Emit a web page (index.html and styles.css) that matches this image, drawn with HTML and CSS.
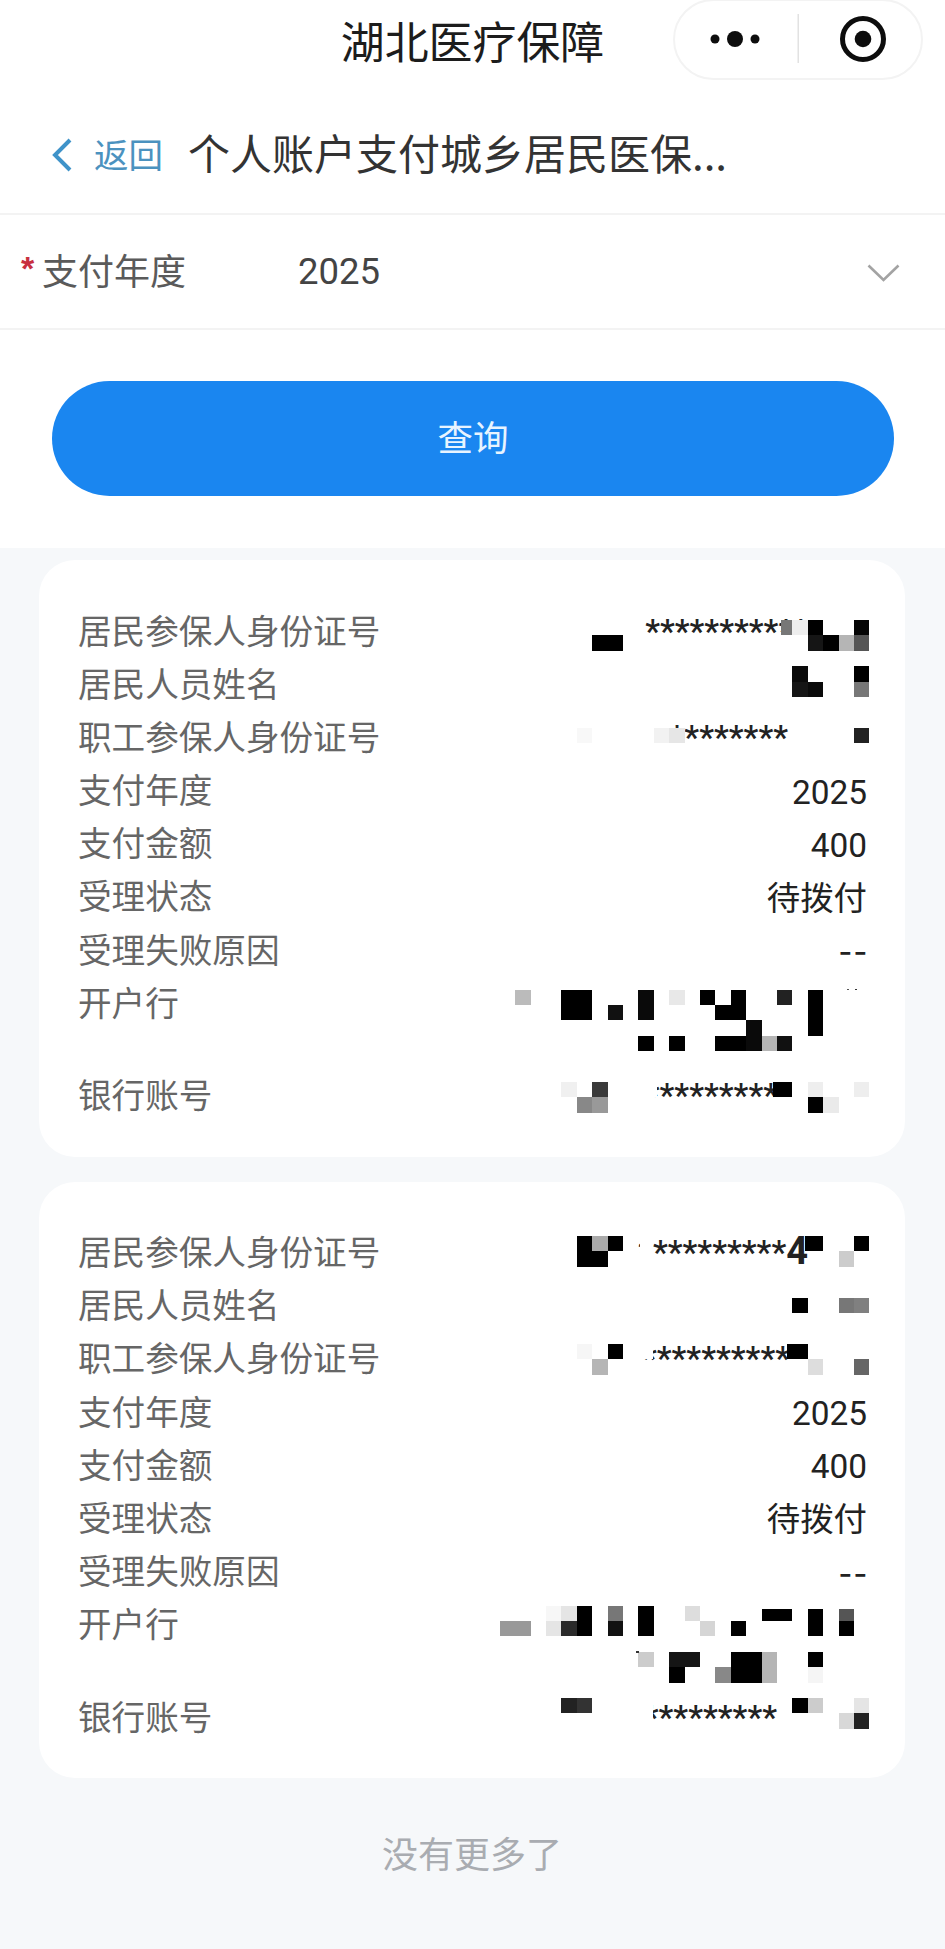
FILE: index.html
```html
<!DOCTYPE html>
<html lang="zh-CN">
<head>
<meta charset="utf-8">
<title>湖北医疗保障</title>
<link rel="stylesheet" href="styles.css">
</head>
<body>
<div class="page">
  <section class="top">
    <header class="appbar">
      <h1 class="appbar-title">湖北医疗保障</h1>
      <div class="capsule">
        <svg class="capsule-icon" width="250" height="80" viewBox="0 0 250 80">
          <circle cx="42" cy="39" r="4.5" fill="#0d0d0d"/>
          <circle cx="62" cy="39" r="8" fill="#0d0d0d"/>
          <circle cx="82" cy="39" r="4.5" fill="#0d0d0d"/>
          <rect x="124.5" y="14" width="1.5" height="49" fill="#e2e2e2"/>
          <circle cx="190" cy="39" r="20.5" fill="none" stroke="#0d0d0d" stroke-width="5"/>
          <circle cx="190" cy="39" r="8.3" fill="#0d0d0d"/>
        </svg>
      </div>
    </header>
    <nav class="navbar">
      <a class="back">
        <svg class="back-icon" width="20" height="34" viewBox="0 0 20 34"><path d="M18 2 L3 17 L18 32" fill="none" stroke="#3f93c9" stroke-width="4"/></svg>
        <span class="back-text">返回</span>
      </a>
      <span class="nav-title">个人账户支付城乡居民医保...</span>
    </nav>
    <div class="field">
      <span class="req">*</span>
      <span class="field-label">支付年度</span>
      <span class="field-value">2025</span>
      <svg class="field-arrow" width="33" height="18" viewBox="0 0 33 18"><path d="M1.5 1.5 L16.5 16 L31.5 1.5" fill="none" stroke="#a3a3a3" stroke-width="2.6"/></svg>
    </div>
    <button class="query" type="button">查询</button>
  </section>

  <main class="list">
    <article class="card">
      <div class="row"><span class="key">居民参保人身份证号</span><span class="val masked end-59">***********</span></div>
      <div class="row"><span class="key">居民人员姓名</span><span class="val"></span></div>
      <div class="row"><span class="key">职工参保人身份证号</span><span class="val masked end-79">********</span></div>
      <div class="row"><span class="key">支付年度</span><span class="val">2025</span></div>
      <div class="row"><span class="key">支付金额</span><span class="val">400</span></div>
      <div class="row"><span class="key">受理状态</span><span class="val">待拨付</span></div>
      <div class="row"><span class="key">受理失败原因</span><span class="val dash">--</span></div>
      <div class="row row-tall"><span class="key">开户行</span><span class="val"></span></div>
      <div class="row"><span class="key">银行账号</span><span class="val masked end-89">*********</span></div>
    </article>
    <article class="card">
      <div class="row"><span class="key">居民参保人身份证号</span><span class="val masked end-59">**********<b class="tail">4</b></span></div>
      <div class="row"><span class="key">居民人员姓名</span><span class="val"></span></div>
      <div class="row"><span class="key">职工参保人身份证号</span><span class="val masked end-77">**********</span></div>
      <div class="row"><span class="key">支付年度</span><span class="val">2025</span></div>
      <div class="row"><span class="key">支付金额</span><span class="val">400</span></div>
      <div class="row"><span class="key">受理状态</span><span class="val">待拨付</span></div>
      <div class="row"><span class="key">受理失败原因</span><span class="val dash">--</span></div>
      <div class="row row-tall"><span class="key">开户行</span><span class="val"></span></div>
      <div class="row"><span class="key">银行账号</span><span class="val masked end-90">*********</span></div>
    </article>
    <p class="nomore">没有更多了</p>
  </main>

  <svg class="mosaic" width="945" height="1949" viewBox="-56.461 -40.26 61.364 126.558" shape-rendering="crispEdges" aria-hidden="true">
    <!-- card 1: id -->
    <rect x="-1" y="0" width="1" height="1" fill="#050505"/>
    <rect x="-4" y="0" width="1" height="1" fill="#000"/>
    <rect x="-5" y="0" width="1" height="1" fill="#eee"/>
    <rect x="-5.75" y="0" width="0.75" height="1" fill="#777"/>
    <rect x="-1" y="1" width="1" height="1" fill="#555"/>
    <rect x="-2" y="1" width="1" height="1" fill="#b5b5b5"/>
    <rect x="-3" y="1" width="1" height="1" fill="#000"/>
    <rect x="-4" y="1" width="1" height="1" fill="#151515"/>
    <rect x="-18" y="1" width="2" height="1" fill="#000"/>
    <!-- card 1: name -->
    <rect x="-1" y="3" width="1" height="1" fill="#000"/>
    <rect x="-5" y="3" width="1" height="1" fill="#0a0a0a"/>
    <rect x="-1" y="4" width="1" height="1" fill="#777"/>
    <rect x="-4" y="4" width="1" height="1" fill="#0a0a0a"/>
    <rect x="-5" y="4" width="1" height="1" fill="#151515"/>
    <!-- card 1: worker id -->
    <rect x="-1" y="7" width="1" height="1" fill="#222"/>
    <rect x="-13" y="7" width="1" height="1" fill="#e6e6e6"/>
    <rect x="-14" y="7" width="1" height="1" fill="#f2f2f2"/>
    <rect x="-19" y="7" width="1" height="1" fill="#f8f8f8"/>
    <!-- card 1: bank -->
    <rect x="-23" y="24" width="1" height="1" fill="#bbb"/>
    <rect x="-20" y="24" width="2" height="2" fill="#000"/>
    <rect x="-15" y="24" width="1" height="2" fill="#0a0a0a"/>
    <rect x="-13" y="24" width="1" height="1" fill="#e8e8e8"/>
    <rect x="-11" y="24" width="1" height="1" fill="#000"/>
    <rect x="-9" y="24" width="1" height="1" fill="#000"/>
    <rect x="-6" y="24" width="1" height="1" fill="#222"/>
    <rect x="-4" y="24" width="1" height="3" fill="#000"/>
    <rect x="-17" y="25" width="1" height="1" fill="#111"/>
    <rect x="-10" y="25" width="2" height="1" fill="#000"/>
    <rect x="-8" y="26" width="1" height="2" fill="#0a0a0a"/>
    <rect x="-15" y="27" width="1" height="1" fill="#000"/>
    <rect x="-13" y="27" width="1" height="1" fill="#000"/>
    <rect x="-10" y="27" width="2" height="1" fill="#000"/>
    <rect x="-7" y="27" width="1" height="1" fill="#b5b5b5"/>
    <rect x="-6" y="27" width="1" height="1" fill="#111"/>
    <rect x="-1.48" y="23.93" width="0.12" height="0.08" fill="#555"/>
    <rect x="-0.94" y="23.93" width="0.12" height="0.08" fill="#333"/>
    <!-- card 1: account -->
    <rect x="-14.9" y="30" width="1.08" height="1" fill="#fff"/>
    <rect x="-20" y="30" width="1" height="1" fill="#f0f0f0"/>
    <rect x="-18" y="30" width="1" height="1" fill="#3a3a3a"/>
    <rect x="-6.25" y="30" width="1.25" height="1" fill="#000"/>
    <rect x="-4" y="30" width="1" height="1" fill="#eee"/>
    <rect x="-1" y="30" width="1" height="1" fill="#eee"/>
    <rect x="-19" y="31" width="1" height="1" fill="#888"/>
    <rect x="-18" y="31" width="1" height="1" fill="#999"/>
    <rect x="-4" y="31" width="1" height="1" fill="#000"/>
    <rect x="-3" y="31" width="1" height="1" fill="#eaeaea"/>
    <!-- card 2: id -->
    <rect x="-14.9" y="40" width="0.82" height="2" fill="#fff"/>
    <rect x="-1" y="40" width="1" height="1" fill="#000"/>
    <rect x="-4.19" y="40" width="1.19" height="1" fill="#000"/>
    <rect x="-17" y="40" width="1" height="1" fill="#000"/>
    <rect x="-18" y="40" width="1" height="1" fill="#aaa"/>
    <rect x="-19" y="40" width="1" height="1" fill="#000"/>
    <rect x="-2" y="41" width="1" height="1" fill="#ccc"/>
    <rect x="-19" y="41" width="2" height="1" fill="#000"/>
    <!-- card 2: name -->
    <rect x="-5" y="44" width="1" height="1" fill="#000"/>
    <rect x="-2" y="44" width="1" height="1" fill="#777"/>
    <rect x="-1" y="44" width="1" height="1" fill="#808080"/>
    <!-- card 2: worker id -->
    <rect x="-14.9" y="47" width="0.82" height="1" fill="#fff"/>
    <rect x="-17" y="47" width="1" height="1" fill="#000"/>
    <rect x="-5.38" y="47" width="1.38" height="1" fill="#000"/>
    <rect x="-19" y="47" width="1" height="1" fill="#f6f6f6"/>
    <rect x="-18" y="48" width="1" height="1" fill="#b5b5b5"/>
    <rect x="-4" y="48" width="1" height="1" fill="#ddd"/>
    <rect x="-1" y="48" width="1" height="1" fill="#666"/>
    <!-- card 2: bank -->
    <rect x="-21" y="64" width="1" height="1" fill="#f7f7f7"/>
    <rect x="-20" y="64" width="1" height="1" fill="#e5e5e5"/>
    <rect x="-19" y="64" width="1" height="2" fill="#000"/>
    <rect x="-17" y="64" width="1" height="1" fill="#777"/>
    <rect x="-15" y="64" width="1" height="2" fill="#000"/>
    <rect x="-12" y="64" width="1" height="1" fill="#ddd"/>
    <rect x="-7" y="64.2" width="2" height="0.8" fill="#000"/>
    <rect x="-4" y="64.2" width="1" height="1.8" fill="#000"/>
    <rect x="-2" y="64.2" width="1" height="0.8" fill="#555"/>
    <rect x="-24" y="65" width="2" height="1" fill="#999"/>
    <rect x="-21" y="65" width="1" height="1" fill="#e5e5e5"/>
    <rect x="-20" y="65" width="1" height="1" fill="#2a2a2a"/>
    <rect x="-17" y="65" width="1" height="1" fill="#111"/>
    <rect x="-11" y="65" width="1" height="1" fill="#d5d5d5"/>
    <rect x="-9" y="65" width="1" height="1" fill="#000"/>
    <rect x="-2" y="65" width="1" height="1" fill="#000"/>
    <rect x="-15" y="67" width="1" height="1" fill="#ccc"/>
    <rect x="-15.16" y="66.98" width="0.2" height="0.1" fill="#333"/>
    <rect x="-13" y="67" width="2" height="1" fill="#151515"/>
    <rect x="-9" y="67" width="2" height="2" fill="#000"/>
    <rect x="-7" y="67" width="1" height="2" fill="#b5b5b5"/>
    <rect x="-4" y="67" width="1" height="1" fill="#000"/>
    <rect x="-13" y="68" width="1" height="1" fill="#000"/>
    <rect x="-10" y="68" width="1" height="1" fill="#888"/>
    <rect x="-4" y="68" width="1" height="1" fill="#f5f5f5"/>
    <!-- card 2: account -->
    <rect x="-14.9" y="70" width="0.82" height="2" fill="#fff"/>
    <rect x="-20" y="70" width="1" height="1" fill="#222"/>
    <rect x="-19" y="70" width="1" height="1" fill="#333"/>
    <rect x="-5" y="70" width="1" height="1" fill="#000"/>
    <rect x="-4" y="70" width="1" height="1" fill="#ccc"/>
    <rect x="-1" y="70" width="1" height="1" fill="#e5e5e5"/>
    <rect x="-2" y="71" width="1" height="1" fill="#d8d8d8"/>
    <rect x="-1" y="71" width="1" height="1" fill="#222"/>
  </svg>
</div>
</body>
</html>
```

FILE: styles.css
```css
* { box-sizing: border-box; }
html, body { margin: 0; padding: 0; }
body {
  background: #f6f8fa;
  font-family: "Noto Sans CJK SC", "Noto Sans", sans-serif;
}
.page {
  position: relative;
  width: 945px;
  height: 1949px;
  overflow: hidden;
}

/* top white area */
.top {
  background: #fff;
  height: 548px;
  display: flex;
  flex-direction: column;
}
.appbar {
  position: relative;
  height: 82px;
  display: flex;
  align-items: center;
  justify-content: center;
}
.appbar-title {
  margin: 0 0 2px;
  font-size: 43.9px;
  font-weight: 400;
  line-height: 82px;
  color: #1c1c1c;
}
.capsule {
  position: absolute;
  left: 673px;
  top: -1px;
  width: 250px;
  height: 81px;
  border: 2px solid #f3f3f3;
  border-radius: 41px;
}
.capsule-icon {
  position: absolute;
  left: -2px;
  top: -1px;
}

.navbar {
  height: 133px;
  padding: 14px 0 0 52px;
  display: flex;
  align-items: center;
  border-bottom: 2px solid #f3f3f3;
}
.back { display: flex; align-items: center; }
.back-icon { display: block; }
.back-text {
  margin: 0 0 4px 22px;
  font-size: 34.5px;
  line-height: 50px;
  color: #4b92bf;
}
.nav-title {
  margin: 0 0 5px 25px;
  font-size: 42px;
  line-height: 56px;
  color: #333;
  white-space: nowrap;
}

.field {
  height: 115px;
  padding: 0 45px 0 21px;
  display: flex;
  align-items: center;
  border-bottom: 2px solid #f3f3f3;
}
.req {
  width: 21px;
  height: 30px;
  margin-top: -8px;
  font-family: "Liberation Sans", sans-serif;
  font-size: 34px;
  font-weight: 700;
  line-height: 30px;
  color: #c8303f;
}
.field-label {
  width: 256px;
  margin-bottom: 5px;
  font-size: 36px;
  line-height: 50px;
  color: #5a5a5a;
}
.field-value {
  flex: 1;
  font-family: Roboto, sans-serif;
  font-size: 36.5px;
  line-height: 50px;
  color: #444;
}
.field-arrow { display: block; margin-top: 2px; }

.query {
  display: block;
  width: 842px;
  height: 115px;
  margin: 51px 0 0 52px;
  padding: 0 0 7px;
  border: 0;
  border-radius: 58px;
  background: #1a86f0;
  color: #e8f4ff;
  font-family: inherit;
  font-size: 35.5px;
}

/* list */
.list {
  padding: 12px 40px 0 39px;
  display: flex;
  flex-direction: column;
  gap: 25px;
}
.card {
  background: #fff;
  border-radius: 36px;
  padding: 53px 38px 39px 39px;
  display: flex;
  flex-direction: column;
  gap: 13.2px;
}
.row {
  display: flex;
  justify-content: space-between;
  height: 40px;
  font-size: 33.4px;
  line-height: 40px;
}
.row-tall { height: 79px; }
.key { margin-top: -3.5px; font-size: 33.6px; color: #666; white-space: nowrap; }
.val {
  font-family: Roboto, "Noto Sans CJK SC", sans-serif;
  color: #222;
  white-space: nowrap;
}
.dash {
  font-family: "Noto Sans CJK SC", sans-serif;
  font-size: 38px;
  letter-spacing: 2px;
  margin: -4px -2px 0 0;
}
.masked { margin-top: -1.5px; font-weight: 500; }
.tail { font-size: 38px; font-weight: 700; line-height: 30px; }
.end-59 { margin-right: 59px; }
.end-77 { margin-right: 77px; }
.end-79 { margin-right: 79px; }
.end-89 { margin-right: 89px; }
.end-90 { margin-right: 90px; }

.nomore {
  margin: 24px 0 0;
  text-align: center;
  font-size: 36px;
  line-height: 50px;
  color: #a9acb1;
}

/* pixelated privacy mask laid over the values */
.mosaic {
  position: absolute;
  left: 0;
  top: 0;
  pointer-events: none;
}
```
